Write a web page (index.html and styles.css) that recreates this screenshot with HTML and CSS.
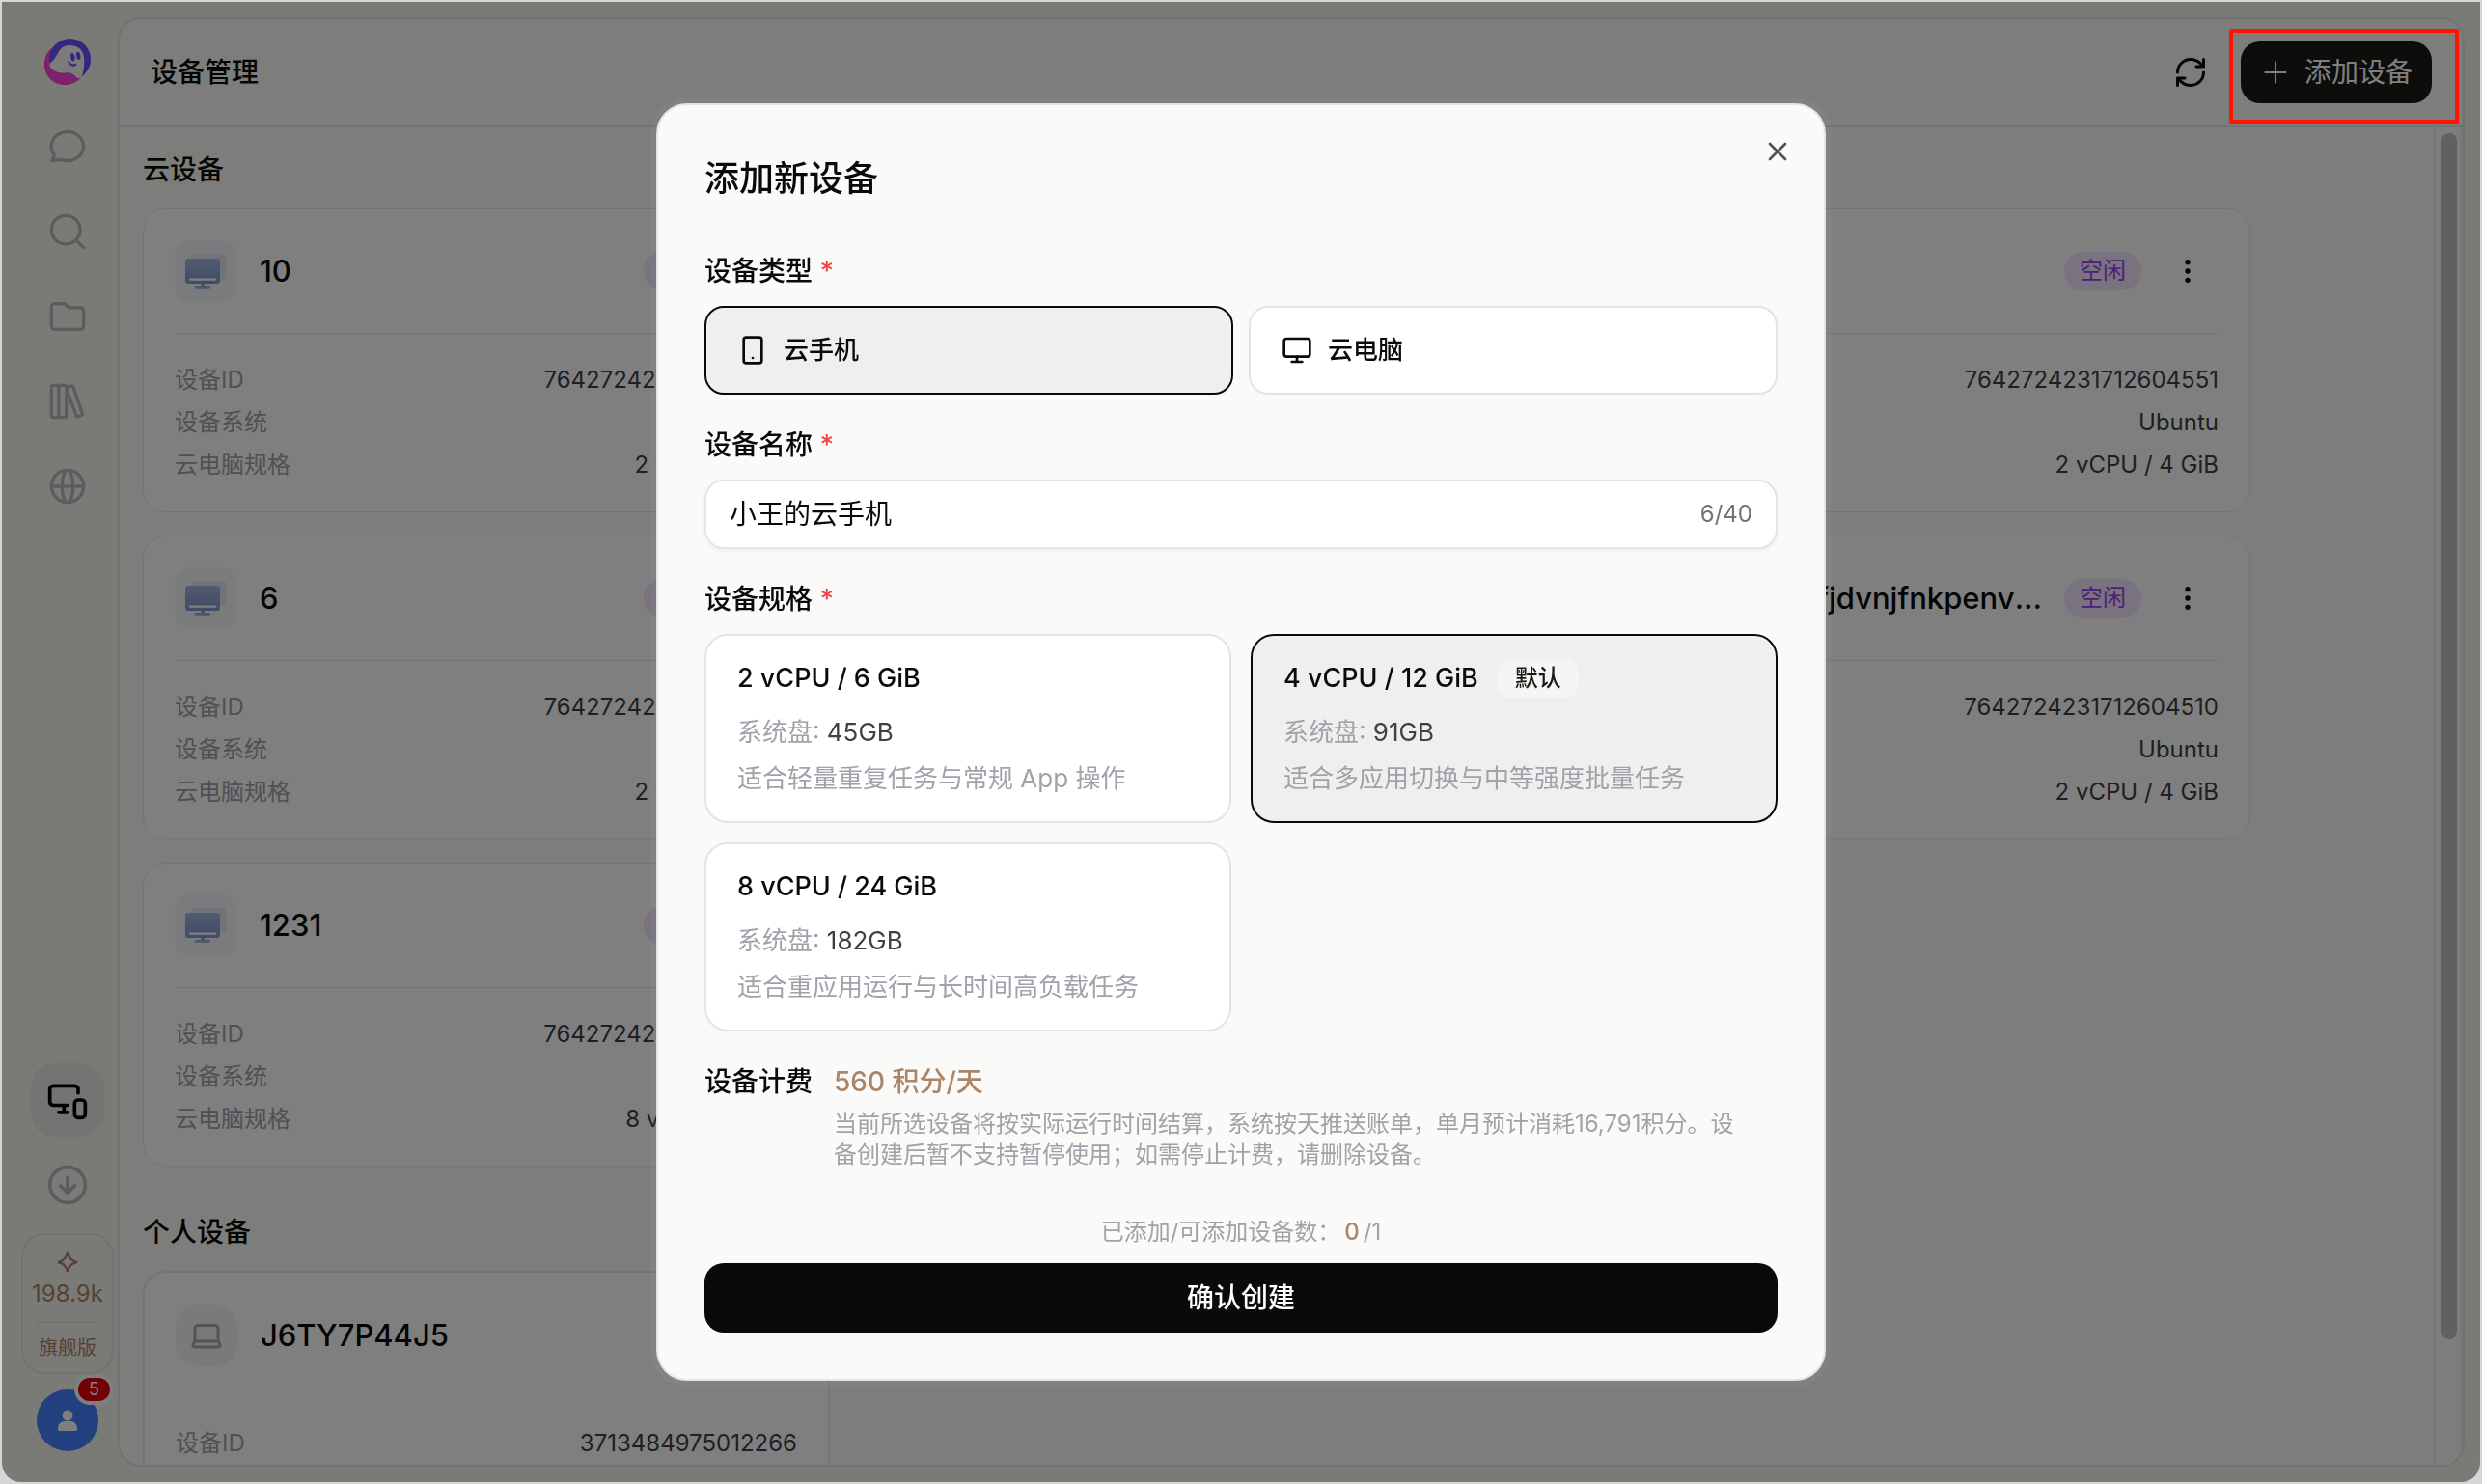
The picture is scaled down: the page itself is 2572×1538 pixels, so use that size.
FILE: index.html
```html
<!DOCTYPE html>
<html lang="zh-CN">
<head>
    <meta charset="UTF-8">
    <meta name="viewport" content="width=device-width, initial-scale=1.0">
    <title>设备管理</title>
    <link rel="stylesheet" href="styles.css">
</head>
<body>
    <svg class="sprite" aria-hidden="true">
        <symbol id="icon-cloud-pc" viewBox="0 0 64 64">
            <defs>
                <linearGradient id="screen" x1="0" y1="0" x2="0" y2="1">
                    <stop offset="0" stop-color="#a2b6e2"/>
                    <stop offset="1" stop-color="#8297cc"/>
                </linearGradient>
            </defs>
            <rect x="17" y="14" width="36" height="26" rx="3" fill="#e3e6f3"/>
            <rect x="11" y="19" width="36" height="26" rx="3" fill="url(#screen)"/>
            <rect x="15" y="39.6" width="28.4" height="2.2" rx="1" fill="#fff"/>
            <path d="M27.4 45h3.4v2h-3.4z" fill="#8297cc"/>
            <rect x="21" y="47" width="16" height="2.8" rx="1.4" fill="#97aad8"/>
        </symbol>
        <symbol id="icon-dots" viewBox="0 0 24 24">
            <g fill="currentColor">
                <circle cx="12" cy="5" r="2"/>
                <circle cx="12" cy="12" r="2"/>
                <circle cx="12" cy="19" r="2"/>
            </g>
        </symbol>
    </svg>

    <div class="shell">
        <nav class="sidebar">
            <svg class="logo" viewBox="0 0 48 48">
                <circle cx="21.5" cy="26.5" r="21.5" fill="#fc42d2"/>
                <circle cx="26.5" cy="21.5" r="21.5" fill="#6b4dff"/>
                <path d="M5.4 25.5C10 23.5 12.5 17 15.5 12.5C18.5 8 22.5 6.7 27 6.9C36.5 7.3 41 13 41.2 22C41.4 29 40.8 34 38.5 39.5C37.5 41.8 34.2 41.6 32.6 40C30.5 37.6 28.3 35 24 35.6C17 36.7 8 34.5 5.4 29z" fill="#f6f6f4"/>
                <path d="M4.6 26C6 33 14 37 23.5 35.5C27.5 34.8 30 38 32.4 40.2C34 41.6 36.5 41.4 37 40.6C33 45.5 27 48 21.5 48C9 48 0 38.5 0 26.5C0 19 3.5 13.5 8.6 9.3C5 14.5 4 20 4.6 26z" fill="#fc42d2"/>
                <ellipse cx="29.4" cy="19.2" rx="2.2" ry="4.3" transform="rotate(-10 29.4 19.2)" fill="#6b4dff"/>
                <ellipse cx="35.2" cy="17.8" rx="2.1" ry="4.2" transform="rotate(-10 35.2 17.8)" fill="#6b4dff"/>
                <path d="M25.2 24C26.5 27.6 30 28.4 32.4 26.6" fill="none" stroke="#6b4dff" stroke-width="2.2" stroke-linecap="round"/>
            </svg>
            <div class="nav-group">
                <a class="nav-item" href="#chat" aria-label="对话">
                    <svg class="icon" viewBox="0 0 24 24"><path d="M3.7 16.9A10 9 0 1 1 7.9 20Q6 20.2 2.2 20.8Q3.8 18.5 3.7 16.9z"/></svg>
                </a>
                <a class="nav-item" href="#search" aria-label="搜索">
                    <svg class="icon" viewBox="0 0 24 24"><circle cx="10.9" cy="10.9" r="8.9"/><path d="m22 22-4.6-4.6"/></svg>
                </a>
                <a class="nav-item" href="#files" aria-label="文件">
                    <svg class="icon" viewBox="0 0 24 24"><path d="M20 20a2 2 0 0 0 2-2V8.5a2 2 0 0 0-2-2h-6.5a2 2 0 0 1-1.5-.7l-.9-1.1A2 2 0 0 0 9.6 4H4a2 2 0 0 0-2 2v12a2 2 0 0 0 2 2Z"/></svg>
                </a>
                <a class="nav-item" href="#library" aria-label="资料库">
                    <svg class="icon" viewBox="0 0 24 24"><path d="M11.2 3v18a1 1 0 0 1-1 1H3a1 1 0 0 1-1-1V3a1 1 0 0 1 1-1h7.2a1 1 0 0 1 1 1zM6.5 2v20M12.3 3.1l2-.7a1 1 0 0 1 1.2.6l5.7 16.5a1 1 0 0 1-.6 1.2l-1.8.7a1 1 0 0 1-1.3-.6L11.3 4.7"/></svg>
                </a>
                <a class="nav-item" href="#web" aria-label="网络">
                    <svg class="icon" viewBox="0 0 24 24"><circle cx="12" cy="12" r="10"/><ellipse cx="12" cy="12" rx="3.4" ry="10"/><path d="M2 12h20"/></svg>
                </a>
            </div>
            <div class="nav-group nav-bottom">
                <a class="nav-item active" href="#devices" aria-label="设备管理">
                    <svg class="icon icon-lg" viewBox="0 0 24 24"><path d="M18 8V6a2 2 0 0 0-2-2H4a2 2 0 0 0-2 2v7a2 2 0 0 0 2 2h8M10 19v-3.96 3.15M7 19h5"/><rect x="16" y="12" width="6" height="10" rx="2"/></svg>
                </a>
                <a class="nav-item" href="#download" aria-label="下载">
                    <svg class="icon icon-lg" viewBox="0 0 24 24"><circle cx="12" cy="12" r="10"/><path d="M12 8v8M8 12.5l4 4 4-4"/></svg>
                </a>
            </div>
            <div class="credits">
                <svg class="spark" viewBox="0 0 24 24"><path d="M12 3.5Q13.4 10.6 20.5 12Q13.4 13.4 12 20.5Q10.6 13.4 3.5 12Q10.6 10.6 12 3.5z"/></svg>
                <span class="credits-value">198.9k</span>
                <hr>
                <span class="credits-plan">旗舰版</span>
            </div>
            <button class="avatar" type="button" aria-label="账号">
                <svg viewBox="0 0 64 64"><circle cx="32" cy="27" r="5.5"/><path d="M22 41c0-5 3-8 7-8h6c4 0 7 3 7 8v.5a1.5 1.5 0 0 1-1.5 1.5h-17a1.5 1.5 0 0 1-1.5-1.5z"/></svg>
                <span class="badge">5</span>
            </button>
        </nav>

        <main class="panel">
            <header class="panel-header">
                <h1>设备管理</h1>
                <button class="refresh" type="button" aria-label="刷新">
                    <svg class="icon" viewBox="0 0 24 24"><path d="M3 12a9 9 0 0 1 9-9 9.75 9.75 0 0 1 6.74 2.74L21 8M21 3v5h-5M21 12a9 9 0 0 1-9 9 9.75 9.75 0 0 1-6.74-2.74L3 16M8 16H3v5"/></svg>
                </button>
                <button class="add-button" type="button">
                    <svg class="icon" viewBox="0 0 24 24"><path d="M4 12h16M12 4v16"/></svg>
                    添加设备
                </button>
            </header>
            <div class="panel-body">
                <div class="content">
                    <h2>云设备</h2>
                    <div class="card-grid">
                        <article class="card">
                            <div class="card-head">
                                <svg class="tile"><use href="#icon-cloud-pc"/></svg>
                                <h3>10</h3>
                                <span class="status">空闲</span>
                                <button class="more" type="button" aria-label="更多"><svg><use href="#icon-dots"/></svg></button>
                            </div>
                            <dl>
                                <div><dt>设备ID</dt><dd>7642724231712604561</dd></div>
                                <div><dt>设备系统</dt><dd>Ubuntu</dd></div>
                                <div><dt>云电脑规格</dt><dd>2 vCPU / 4 GiB</dd></div>
                            </dl>
                        </article>
                        <article class="card card-last">
                            <div class="card-head">
                                <svg class="tile"><use href="#icon-cloud-pc"/></svg>
                                <h3>8</h3>
                                <span class="status">空闲</span>
                                <button class="more" type="button" aria-label="更多"><svg><use href="#icon-dots"/></svg></button>
                            </div>
                            <dl>
                                <div><dt>设备ID</dt><dd>7642724231712604551</dd></div>
                                <div><dt>设备系统</dt><dd>Ubuntu</dd></div>
                                <div><dt>云电脑规格</dt><dd>2 vCPU / 4 GiB</dd></div>
                            </dl>
                        </article>
                        <article class="card">
                            <div class="card-head">
                                <svg class="tile"><use href="#icon-cloud-pc"/></svg>
                                <h3>6</h3>
                                <span class="status">空闲</span>
                                <button class="more" type="button" aria-label="更多"><svg><use href="#icon-dots"/></svg></button>
                            </div>
                            <dl>
                                <div><dt>设备ID</dt><dd>7642724231712604531</dd></div>
                                <div><dt>设备系统</dt><dd>Ubuntu</dd></div>
                                <div><dt>云电脑规格</dt><dd>2 vCPU / 4 GiB</dd></div>
                            </dl>
                        </article>
                        <article class="card card-last">
                            <div class="card-head">
                                <svg class="tile"><use href="#icon-cloud-pc"/></svg>
                                <h3>fnjvdkrndfjdvnjfnkpenvkdnfv</h3>
                                <span class="status">空闲</span>
                                <button class="more" type="button" aria-label="更多"><svg><use href="#icon-dots"/></svg></button>
                            </div>
                            <dl>
                                <div><dt>设备ID</dt><dd>7642724231712604510</dd></div>
                                <div><dt>设备系统</dt><dd>Ubuntu</dd></div>
                                <div><dt>云电脑规格</dt><dd>2 vCPU / 4 GiB</dd></div>
                            </dl>
                        </article>
                        <article class="card">
                            <div class="card-head">
                                <svg class="tile"><use href="#icon-cloud-pc"/></svg>
                                <h3>1231</h3>
                                <span class="status">空闲</span>
                                <button class="more" type="button" aria-label="更多"><svg><use href="#icon-dots"/></svg></button>
                            </div>
                            <dl>
                                <div><dt>设备ID</dt><dd>7642724231712604501</dd></div>
                                <div><dt>设备系统</dt><dd>Ubuntu</dd></div>
                                <div><dt>云电脑规格</dt><dd>8 vCPU / 16 GiB</dd></div>
                            </dl>
                        </article>
                    </div>
                    <h2>个人设备</h2>
                    <div class="card-grid">
                        <article class="card card-personal">
                            <div class="card-head">
                                <span class="tile tile-gray">
                                    <svg class="icon" viewBox="0 0 24 24"><path d="M18 5a2 2 0 0 1 2 2v8.5l1.3 3a1.1 1.1 0 0 1-1 1.5H3.7a1.1 1.1 0 0 1-1-1.5l1.3-3V7a2 2 0 0 1 2-2zM4 16h16"/></svg>
                                </span>
                                <h3>J6TY7P44J5</h3>
                            </div>
                            <dl>
                                <div><dt>设备ID</dt><dd>3713484975012266</dd></div>
                            </dl>
                        </article>
                    </div>
                </div>
                <div class="scrollbar"><div class="thumb"></div></div>
            </div>
        </main>
    </div>

    <div class="overlay">
        <form class="modal" role="dialog" aria-labelledby="modal-title">
            <button class="close" type="button" aria-label="关闭">
                <svg class="icon" viewBox="0 0 24 24"><path d="M18 6 6 18M6 6l12 12"/></svg>
            </button>
            <h2 id="modal-title">添加新设备</h2>

            <fieldset>
                <legend>设备类型 <span class="required">*</span></legend>
                <div class="types">
                    <label class="option type">
                        <input type="radio" name="type" checked>
                        <svg class="icon" viewBox="0 0 24 24"><rect x="5" y="2" width="14" height="20" rx="2"/><path d="M12 18h.01"/></svg>
                        云手机
                    </label>
                    <label class="option type">
                        <input type="radio" name="type">
                        <svg class="icon" viewBox="0 0 24 24"><rect x="2" y="3" width="20" height="14" rx="2"/><path d="M8 21h8M12 17v4"/></svg>
                        云电脑
                    </label>
                </div>
            </fieldset>

            <div class="field">
                <label class="field-label" for="device-name">设备名称 <span class="required">*</span></label>
                <div class="input-box">
                    <input id="device-name" type="text" maxlength="40" value="小王的云手机">
                    <span class="counter">6/40</span>
                </div>
            </div>

            <fieldset>
                <legend>设备规格 <span class="required">*</span></legend>
                <div class="specs">
                    <label class="option spec">
                        <input type="radio" name="spec">
                        <span class="spec-title">2 vCPU / 6 GiB</span>
                        <span class="spec-disk">系统盘: <b>45GB</b></span>
                        <span class="spec-note">适合轻量重复任务与常规 App 操作</span>
                    </label>
                    <label class="option spec">
                        <input type="radio" name="spec" checked>
                        <span class="spec-title">4 vCPU / 12 GiB <span class="tag">默认</span></span>
                        <span class="spec-disk">系统盘: <b>91GB</b></span>
                        <span class="spec-note">适合多应用切换与中等强度批量任务</span>
                    </label>
                    <label class="option spec">
                        <input type="radio" name="spec">
                        <span class="spec-title">8 vCPU / 24 GiB</span>
                        <span class="spec-disk">系统盘: <b>182GB</b></span>
                        <span class="spec-note">适合重应用运行与长时间高负载任务</span>
                    </label>
                </div>
            </fieldset>

            <div class="billing">
                <span class="billing-label">设备计费</span>
                <div>
                    <p class="price">560 积分/天</p>
                    <p class="billing-note">当前所选设备将按实际运行时间结算，系统按天推送账单，单月预计消耗16,791积分。设备创建后暂不支持暂停使用；如需停止计费，请删除设备。</p>
                </div>
            </div>

            <p class="quota">已添加/可添加设备数：<b>0</b>/1</p>
            <button class="submit" type="submit">确认创建</button>
        </form>
    </div>

    <div class="highlight"></div>
</body>
</html>
```
FILE: styles.css
```css
* {
    box-sizing: border-box;
}
body {
    margin: 0;
    padding: 2px;
    height: 100vh;
    background: #d6d6d7;
    font-family: Inter, "Noto Sans CJK SC", sans-serif;
    font-size: 24px;
    line-height: 32px;
    color: #0a0a09;
}
h1, h2, h3, p, dl, dd, fieldset {
    margin: 0;
    padding: 0;
    border: 0;
}
h1, h2, h3 {
    font-weight: 500;
}
button, input {
    font: inherit;
    color: inherit;
    border: 0;
    padding: 0;
    background: none;
}
button {
    cursor: pointer;
}
.sprite {
    position: absolute;
    width: 0;
    height: 0;
}
.icon {
    display: block;
    flex: none;
    width: 40px;
    height: 40px;
    fill: none;
    stroke: currentColor;
    stroke-width: 2;
    stroke-linecap: round;
    stroke-linejoin: round;
}
.icon-lg {
    width: 44px;
    height: 44px;
}

/* Shell */
.shell {
    display: flex;
    height: 100%;
    padding: 16px;
    background: #f5f5ed;
    border-radius: 0 0 20px 20px;
}
.sidebar {
    display: flex;
    flex-direction: column;
    align-items: center;
    width: 104px;
    padding: 22px 0 16px;
    color: #b9b9be;
}
.logo {
    width: 48px;
    height: 48px;
    margin-bottom: 26px;
}
.nav-group {
    display: flex;
    flex-direction: column;
    gap: 12px;
}
.nav-bottom {
    margin-top: auto;
}
.nav-item {
    display: flex;
    align-items: center;
    justify-content: center;
    width: 76px;
    height: 76px;
    border-radius: 24px;
    color: inherit;
}
.nav-item.active {
    background: #e9e9e6;
    color: #000;
}
.credits {
    display: flex;
    flex-direction: column;
    align-items: center;
    width: 96px;
    height: 146px;
    margin: 12px 0 16px;
    padding-top: 14px;
    border: 2px solid #e4e4e2;
    border-radius: 24px;
    color: #ab8568;
}
.spark {
    width: 28px;
    height: 28px;
    fill: none;
    stroke: currentColor;
    stroke-width: 2;
}
.credits-value {
    margin: 3px 0 12px;
}
.credits hr {
    width: 64px;
    margin: 0 0 10px;
    border: 0;
    border-top: 2px solid #e4e4e2;
}
.credits-plan {
    font-size: 20px;
}
.avatar {
    position: relative;
    width: 64px;
    height: 64px;
    border-radius: 50%;
    background: #447fff;
}
.avatar svg {
    display: block;
    fill: #fff;
}
.badge {
    position: absolute;
    top: -16px;
    right: -16px;
    width: 41px;
    height: 32px;
    border: 4px solid #fff;
    border-radius: 16px;
    background: #e7000b;
    color: #fff;
    font-size: 18px;
    line-height: 24px;
    text-align: center;
}

/* Panel */
.panel {
    flex: 1;
    display: flex;
    flex-direction: column;
    min-width: 0;
    border: 2px solid #e5e5e5;
    border-radius: 24px;
    background: #fbfbf8;
    overflow: hidden;
}
.panel-header {
    display: flex;
    align-items: center;
    flex: none;
    height: 112px;
    padding: 0 32px;
    border-bottom: 2px solid #e5e5e5;
}
h1 {
    flex: 1;
    font-size: 28px;
}
.refresh .icon {
    width: 36px;
    height: 36px;
}
.add-button {
    display: flex;
    align-items: center;
    gap: 14px;
    height: 64px;
    margin-left: 34px;
    padding: 0 20px;
    border-radius: 20px;
    background: #1a1a17;
    color: #fff;
    font-size: 28px;
}
.add-button .icon {
    width: 32px;
    height: 32px;
    stroke-width: 1.5;
}
.panel-body {
    flex: 1;
    display: flex;
    min-height: 0;
}
.content {
    flex: 1;
    padding: 24px;
    overflow: hidden;
}
.content h2 {
    margin-bottom: 20px;
    font-size: 28px;
    line-height: 40px;
}
.card-grid {
    display: grid;
    grid-template-columns: repeat(auto-fill, 712px);
    gap: 24px;
    margin-bottom: 48px;
}
.card {
    padding: 32px;
    border: 1px solid #e9e9e9;
    border-radius: 24px;
    background: #fff;
}
.card-last {
    grid-column: 3;
}
.card-head {
    display: flex;
    align-items: center;
    height: 97px;
    padding-bottom: 32px;
    border-bottom: 1px solid #e9e9e9;
}
.tile {
    flex: none;
    width: 64px;
    height: 64px;
    border-radius: 16px;
    background: #f3f6fa;
}
.tile-gray {
    display: flex;
    align-items: center;
    justify-content: center;
    border-radius: 24px;
    background: #f4f4f4;
    color: #a8a8ad;
}
.tile-gray .icon {
    width: 36px;
    height: 36px;
}
h3 {
    flex: 1;
    margin: 0 16px 0 24px;
    font-size: 31px;
    line-height: 40px;
    white-space: nowrap;
    overflow: hidden;
    text-overflow: ellipsis;
}
.status {
    padding: 4px 16px;
    border-radius: 20px;
    background: #f1e6fc;
    color: #9e3df0;
}
.more {
    display: flex;
    align-items: center;
    justify-content: center;
    width: 64px;
    height: 64px;
    margin-left: 16px;
}
.more svg {
    width: 32px;
    height: 32px;
}
.card dl {
    display: flex;
    flex-direction: column;
    gap: 12px;
    padding-top: 32px;
}
.card dl div {
    display: flex;
    justify-content: space-between;
}
dt {
    color: #a1a1aa;
}
dd {
    color: #3f3f46;
}
.card-personal {
    border-width: 2px;
}
.card-personal .card-head {
    border: 0;
}
.scrollbar {
    flex: none;
    width: 30px;
    padding: 6px;
    border: solid #ebebeb;
    border-width: 0 2px;
    background: #fafafa;
}
.thumb {
    width: 16px;
    height: 91%;
    border-radius: 8px;
    background: #c0c0c0;
}

/* Modal */
.overlay {
    position: fixed;
    inset: 0;
    display: flex;
    align-items: center;
    justify-content: center;
    margin: 2px;
    border-radius: 0 0 20px 20px;
    background: rgba(0, 0, 0, 0.5);
}
.modal {
    position: relative;
    width: 1212px;
    padding: 48px;
    border: 2px solid #e5e5e5;
    border-radius: 32px;
    background: #fafaf9;
    box-shadow: 0 0 0 6px rgba(255, 255, 255, 0.03);
}
.close {
    position: absolute;
    top: 32px;
    right: 32px;
    color: #525250;
}
.close .icon {
    width: 32px;
    height: 32px;
}
.modal h2 {
    margin-bottom: 48px;
    font-size: 36px;
    line-height: 56px;
}
legend, .field-label, .billing-label, .price {
    display: block;
    padding: 0;
    font-size: 28px;
    font-weight: 500;
    line-height: 40px;
}
legend, .field-label {
    margin-bottom: 16px;
}
.required {
    color: #ef4444;
}
.field {
    margin: 32px 0;
}
.option {
    border: 2px solid #e4e4e7;
    background: #fff;
    cursor: pointer;
}
.option:has(input:checked) {
    border-color: #0a0a09;
    background: #efefed;
}
.option input {
    position: absolute;
    opacity: 0;
}
.types {
    display: grid;
    grid-template-columns: 1fr 1fr;
    gap: 16px;
}
.type {
    display: flex;
    align-items: center;
    gap: 16px;
    height: 92px;
    padding: 0 32px;
    border-radius: 20px;
    font-size: 26px;
    font-weight: 500;
}
.type .icon {
    width: 32px;
    height: 32px;
}
.input-box {
    display: flex;
    align-items: center;
    height: 72px;
    padding: 0 24px;
    border: 2px solid #e7e5e4;
    border-radius: 20px;
    background: #fff;
    box-shadow: 0 2px 4px rgba(0, 0, 0, 0.05);
}
.input-box input {
    flex: 1;
    font-size: 28px;
    outline: none;
}
.counter {
    color: #78716c;
}
.specs {
    display: grid;
    grid-template-columns: 1fr 1fr;
    gap: 20px;
}
.spec {
    padding: 24px 32px;
    border-radius: 24px;
    font-size: 26px;
    line-height: 40px;
    color: #a1a1aa;
}
.spec-title {
    display: flex;
    gap: 20px;
    margin-bottom: 16px;
    color: #0a0a09;
    font-size: 27px;
    font-weight: 500;
}
.spec-disk, .spec-note {
    display: block;
}
.spec-disk {
    margin-bottom: 8px;
}
.spec-disk b {
    color: #3f3f46;
    font-weight: 400;
}
.tag {
    padding: 0 18px;
    border-radius: 14px;
    background: #f5f5f4;
    color: #1c1917;
    font-size: 24px;
}
.billing {
    display: flex;
    gap: 22px;
    margin: 32px 0 48px;
}
.billing-label {
    flex: none;
}
.price {
    margin-bottom: 8px;
    color: #ab8568;
}
.billing-note {
    padding-right: 32px;
    color: #a1a1aa;
}
.quota {
    margin-bottom: 16px;
    color: #a1a1aa;
    text-align: center;
}
.quota b {
    margin: 0 4px;
    color: #ab8568;
    font-weight: 500;
}
.submit {
    display: block;
    width: 100%;
    height: 72px;
    border-radius: 20px;
    background: #0a0a09;
    color: #fff;
    font-size: 28px;
    font-weight: 500;
}

/* Red frame around the add button */
.highlight {
    position: fixed;
    top: 30px;
    right: 24px;
    width: 238px;
    height: 98px;
    border: 4px solid #ff1400;
    border-radius: 2px;
}
```
